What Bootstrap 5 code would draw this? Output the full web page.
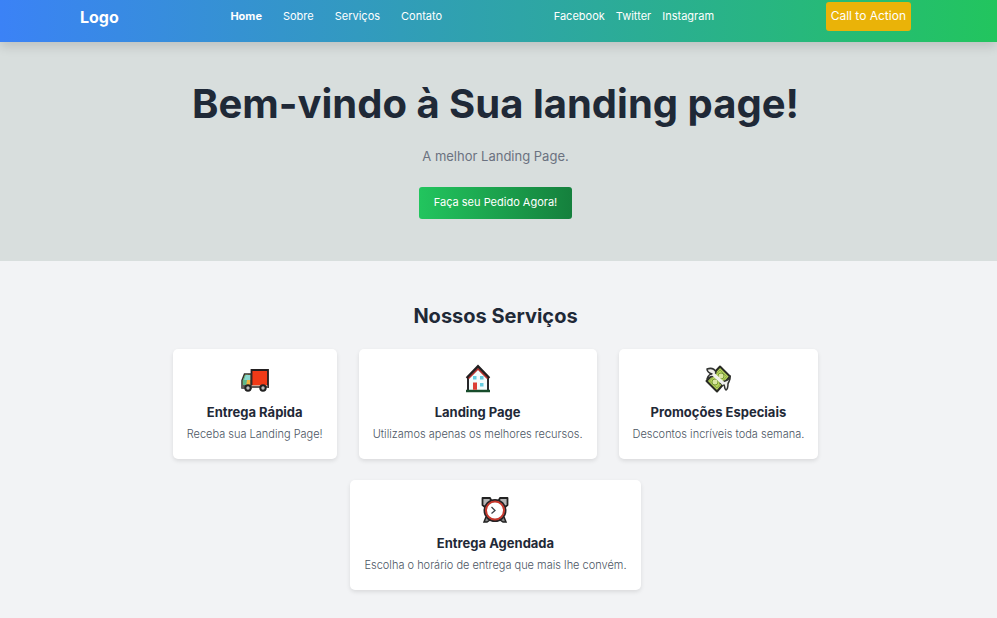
<!DOCTYPE html>
<html lang="pt-BR">
<head>
<meta charset="utf-8">
<meta name="viewport" content="width=device-width, initial-scale=1">
<title>Landing Page</title>
<link href="https://cdn.jsdelivr.net/npm/bootstrap@5.3.0/dist/css/bootstrap.min.css" rel="stylesheet">
<style>
body { font-family: Inter, "Liberation Sans", sans-serif; font-size: 11px; line-height: 16px; background: #f2f3f5; color: #1f2937; }
.site-bar { background: linear-gradient(to right, #3b82f6, #22c55e); box-shadow: 0 5px 10px rgba(0,0,0,.12); padding: 2px 86px 11px 80px; z-index: 2; }
.site-bar a { color: #fff; text-decoration: none; }
.site-bar .brand { font-size: 16px; font-weight: 700; line-height: 28px; }
.site-bar nav { padding-bottom: 2px; }
.site-bar a.active { font-weight: 700; }
.main-links { gap: 21px; }
.social-links { gap: 11px; }
.btn-call { --bs-btn-bg: #eab308; --bs-btn-color: #fff; --bs-btn-hover-bg: #ca9a04; --bs-btn-hover-color: #fff; font-size: 12px; line-height: 18px; padding: 5px 5px 6px; border: 0; border-radius: 3px; }
.hero { background: #d8dedd; padding: 38px 6px 42px 0; }
.hero h1 { font-size: 40px; line-height: 48px; font-weight: 700; margin-bottom: 18px; }
.hero p { font-size: 13px; line-height: 20px; color: #6b7280; margin-bottom: 21px; }
.btn-order { --bs-btn-color: #fff; --bs-btn-hover-color: #fff; background: linear-gradient(to right, #22c55e, #15803d); font-size: 11px; line-height: 16px; padding: 7px 15px 9px; border: 0; border-radius: 3px; }
.services { padding: 41px 6px 29px 0; }
.services h2 { font-size: 20px; line-height: 28px; font-weight: 700; margin-bottom: 19px; }
.service-grid { gap: 21px 22px; max-width: 740px; }
.service { border: 0; border-radius: 5px; box-shadow: 0 2px 4px rgba(0,0,0,.1); padding: 15px 14px 17px; }
.service svg { width: 30px; height: 30px; margin-bottom: 10px; }
.service h3 { font-size: 13px; line-height: 16px; font-weight: 700; margin-bottom: 6px; }
.service p { color: #4b5563; font-weight: 300; margin-bottom: 0; }
</style>
</head>
<body>
<header class="site-bar position-relative d-flex flex-wrap justify-content-between align-items-center">
  <a class="brand" href="#">Logo</a>
  <nav class="main-links d-flex" aria-label="Principal">
    <a class="active" href="#">Home</a><a href="#sobre">Sobre</a><a href="#servicos">Serviços</a><a href="#contato">Contato</a>
  </nav>
  <nav class="social-links d-flex" aria-label="Redes sociais">
    <a href="#">Facebook</a><a href="#">Twitter</a><a href="#">Instagram</a>
  </nav>
  <button type="button" class="btn btn-call">Call to Action</button>
</header>
<main>
  <section class="hero text-center">
    <h1>Bem-vindo à Sua landing page!</h1>
    <p>A melhor Landing Page.</p>
    <button type="button" class="btn btn-order">Faça seu Pedido Agora!</button>
  </section>
  <section class="services text-center" id="servicos">
    <h2>Nossos Serviços</h2>
    <div class="service-grid d-flex flex-wrap justify-content-center mx-auto">
      <article class="card service align-items-center">
        <svg viewBox="0 0 30 30" aria-hidden="true">
          <path d="M11.500 6H28v17H11.500z" fill="#f03a17" stroke="#231f20" stroke-width="1.800"/>
          <path d="M2 24v-7.500L4.500 10H11v14z" fill="#f3b33d" stroke="#303030" stroke-width="1.500"/>
          <path d="M2.800 22v-5.500l2.300-5.700H8L6 22z" fill="#5eb88b"/>
          <path d="M4 16l1.800-5h4.400v5z" fill="#8ad8d0"/>
          <path d="M2 22.500h26" stroke="#625b58" stroke-width="3"/>
          <path d="M12 21.500h15" stroke="#d9a08c"/>
          <circle cx="8" cy="24" r="2.700" fill="#bbb" stroke="#222" stroke-width="2"/>
          <circle cx="23" cy="24" r="2.700" fill="#bbb" stroke="#222" stroke-width="2"/>
        </svg>
        <h3>Entrega Rápida</h3><p>Receba sua Landing Page!</p>
      </article>
      <article class="card service align-items-center">
        <svg viewBox="0 0 30 30" aria-hidden="true">
          <path d="M5 13 15 3l10 10v14H5z" fill="#f4fbfb" stroke="#26272a" stroke-width="2"/>
          <path d="M5.500 14.500 15 5l9.500 9.500" fill="none" stroke="#b52d29" stroke-width="1.500"/>
          <path d="M3.500 14 15 2l11.500 12" fill="none" stroke="#231f20" stroke-width="2"/>
          <path d="M3 27h24" stroke="#174c2b" stroke-width="2.500"/>
          <path d="M10 18.500h4v7.300h-4z" fill="#dc3e35"/>
          <path d="M10 12h3.500v3.500H10zM17 12h3.500v3.500H17zM17 19h3.500v3.500H17z" fill="#65cce0"/>
        </svg>
        <h3>Landing Page</h3><p>Utilizamos apenas os melhores recursos.</p>
      </article>
      <article class="card service align-items-center">
        <svg viewBox="0 0 30 30" aria-hidden="true">
          <path d="M3.500 17 17 2.500l10 10L14 27.500z" fill="#b9d65a" stroke="#292b24" stroke-width="2" stroke-linejoin="round"/>
          <path d="M6.500 17 17 6l6.500 6.500L14 24z" fill="none" stroke="#8aa84a"/>
          <circle cx="18" cy="12" r="3" fill="#d9e6a1" stroke="#789838"/>
          <circle cx="12" cy="18" r="3" fill="#d9e6a1" stroke="#789838"/>
          <path d="M13 8c-2-4-6-4-9-3 0 3 2 4 5 5-3 0-4 2-5 5l3-2 4-1zM17 19l5-2c3-1 5-3 5-5 1 5-2 6-2 8 0 3 0 5-2 6-2-1-1-4-2-5z" fill="#f0f1ed" stroke="#303230" stroke-width="1.500" stroke-linejoin="round"/>
          <path d="m10 10 11 10" stroke="#f0f1ed" stroke-width="3.500"/>
        </svg>
        <h3>Promoções Especiais</h3><p>Descontos incríveis toda semana.</p>
      </article>
      <article class="card service align-items-center">
        <svg viewBox="0 0 30 30" aria-hidden="true">
          <path d="M2.500 10V3H10l2 4-6 6zM27.500 10V3H20l-2 4 6 6z" fill="#b5b5b5" stroke="#222" stroke-width="1.800" stroke-linejoin="round"/>
          <path d="m6 22-2 5h3l3-2m14-3 2 5h-3l-3-2" fill="#888" stroke="#222" stroke-width="1.500"/>
          <circle cx="15" cy="15.500" r="10.500" fill="#fff" stroke="#262326" stroke-width="2"/>
          <circle cx="15" cy="15.500" r="9" fill="#fff" stroke="#c6372b" stroke-width="2"/>
          <path d="m11.500 12 3.500 3.500-3.500 3" fill="none" stroke="#3b4146" stroke-width="1.300"/>
        </svg>
        <h3>Entrega Agendada</h3><p>Escolha o horário de entrega que mais lhe convém.</p>
      </article>
    </div>
  </section>
</main>
<script src="https://cdn.jsdelivr.net/npm/bootstrap@5.3.0/dist/js/bootstrap.bundle.min.js"></script>
</body>
</html>
